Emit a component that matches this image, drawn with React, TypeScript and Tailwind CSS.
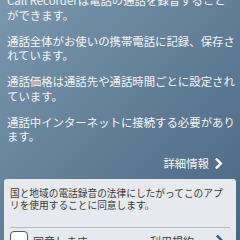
import React from 'react';

function Chevron({ color, className }: { color: string; className?: string }) {
  return (
    <svg viewBox="0 0 8 12" className={className} fill="none">
      <polyline points="1.5,1.5 6,6 1.5,10.5" stroke={color} strokeWidth="2.6" strokeLinecap="square" />
    </svg>
  );
}

export default function App() {
  return (
    <div
      className="w-[240px] h-[240px] overflow-hidden bg-gradient-to-br from-[#7b97ae] to-[#4b6681] flex flex-col"
      style={{ fontFamily: '"Noto Sans CJK JP", "Noto Sans", sans-serif' }}
    >
      <div className="px-[7px] -mt-[7px] text-[11.4px] leading-[14.5px] text-[#f2f5f8] whitespace-nowrap">
        <p>
          Call Recorderは電話の通話を録音すること
          <br />
          ができます。
        </p>
        <p className="mt-[11.5px]">
          通話全体がお使いの携帯電話に記録、保存さ
          <br />
          れています。
        </p>
        <p className="mt-[11.5px]">
          通話価格は通話先や通話時間ごとに設定され
          <br />
          ています。
        </p>
        <p className="mt-[11.5px]">
          通話中インターネットに接続する必要があり
          <br />
          ます。
        </p>
        <div className="flex justify-end items-center gap-[6px] mt-[12.5px] pr-[10px]">
          <span>詳細情報</span>
          <Chevron color="#ffffff" className="w-[8px] h-[11px]" />
        </div>
      </div>
      <div className="mx-[4px] mt-[8px] bg-[#e6eaee] rounded-t-[3px] px-[6px] pt-[8px] flex-1">
        <p className="text-[9.7px] leading-[12.5px] text-[#3a3a3a] whitespace-nowrap">
          国と地域の電話録音の法律にしたがってこのアプ
          <br />
          リを使用することに同意します。
        </p>
        <div className="mt-[15px] h-px bg-[#b4b9be]" />
        <div className="flex items-start mt-[3px] text-[11px] text-[#3a3a3a]">
          <div className="w-[18px] h-[18px] rounded-[4px] border border-[#555] bg-white" />
          <span className="ml-[5px] mt-[2px]">同意します</span>
          <span className="ml-[62px] mt-[2px]">利用規約</span>
          <Chevron color="#2e5f8f" className="ml-auto mr-[6px] mt-[4px] w-[8px] h-[11px]" />
        </div>
      </div>
    </div>
  );
}
